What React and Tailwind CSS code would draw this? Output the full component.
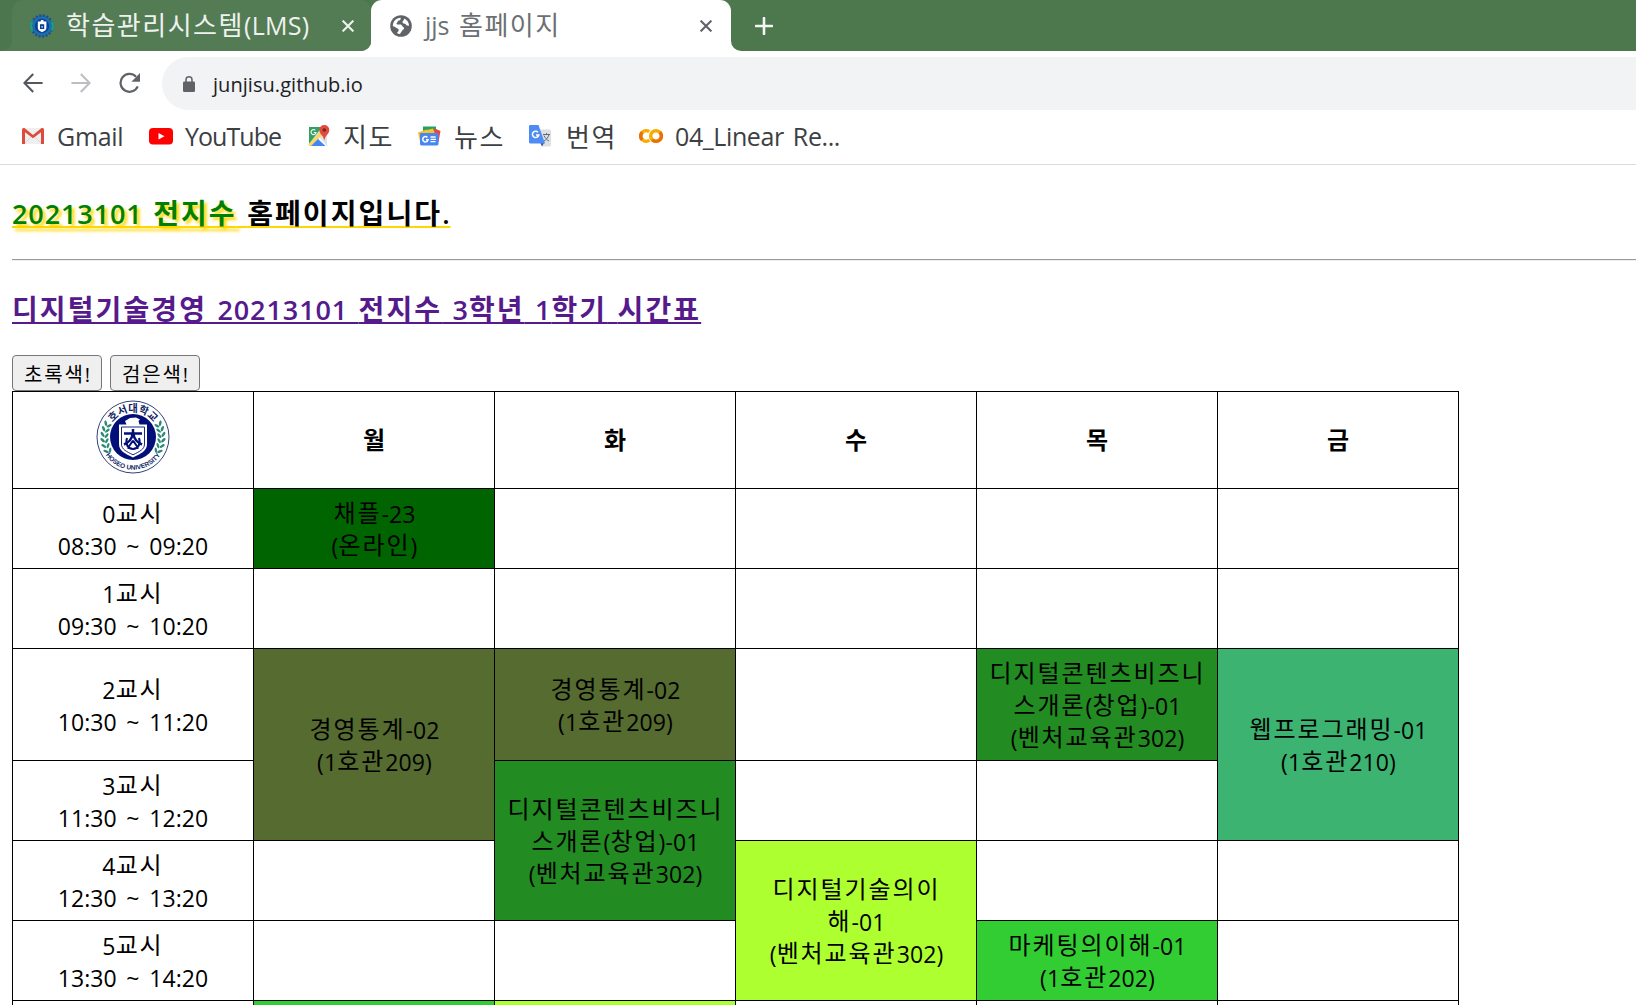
import React from "react";

const HANGUL = /([\u3131-\uD79D]+)/;

/* Hangul runs take their own size and tracking, so that syllables keep an even pitch beside the Latin text. */
function Mixed({ text, ko }) {
  return text.split(HANGUL).map((part, i) =>
    i % 2 ? (
      <span key={i} className={ko}>
        {part}
      </span>
    ) : (
      part
    )
  );
}

const KO_CELL = "relative -top-px font-['Noto_Sans_CJK_KR'] text-[24px] leading-[24px] tracking-[1.92px]";
const KO_HEAD = "font-['Noto_Sans_CJK_KR'] font-bold text-[28px] tracking-[2.1px]";
const KO_BAR = "font-['Noto_Sans_CJK_KR'] text-[26px] tracking-[1.5px]";
const KO_BTN = "font-['Noto_Sans_CJK_KR'] text-[20px] tracking-[1.8px]";

function Cross({ className }) {
  return (
    <svg viewBox="0 0 12 12" className={className} stroke="currentColor" strokeWidth="2.1" fill="none">
      <path d="M.6.6l10.8 10.8M11.400.6L.6 11.400" />
    </svg>
  );
}

function LmsIcon() {
  return (
    <svg viewBox="0 0 24 24" className="h-6 w-6 shrink-0">
      <circle cx="12" cy="12" r="10.4" fill="#1c6fa8" />
      <circle cx="12" cy="12" r="10.6" fill="none" stroke="#1d4f96" strokeWidth="2.4" strokeDasharray="2 1.6" />
      <path d="M2.2 7.5a11 11 0 0 0 0 9M21.8 7.5a11 11 0 0 1 0 9" fill="none" stroke="#17a08c" strokeWidth="2.2" />
      <circle cx="12" cy="12" r="7.2" fill="#0b3f95" />
      <path d="M7.8 7.6h2.6l.8-1.6h2l.6 1.6h2.6v6.2c0 2.2-1.7 3.4-4.3 4.4-2.6-1-4.3-2.2-4.3-4.4z" fill="#fff" />
      <path d="M10 10.2h4.2v4.8H10z" fill="#0b3f95" />
      <path d="M11.2 12h1.8v1.8h-1.8z" fill="#8fb0dc" />
    </svg>
  );
}

function GlobeIcon() {
  return (
    <svg viewBox="0 0 22 22" className="h-[22px] w-[22px] shrink-0">
      <circle cx="11" cy="11" r="10.8" fill="#5f6368" />
      <path
        d="M2.9 11.2C2.6 6.600 6.200 2.900 10.700 2.700L10.600 4.200C10.500 5.200 9.400 5.300 8.500 5.600 7.600 6 8 7.200 7 7.700 6.300 8.100 6.500 9.400 7.500 9.500L10.800 9.600C12.200 9.800 11.800 11.600 13.100 11.900 14.400 12.200 14.400 13.900 13.300 14.400 12.100 15 12 16 11.300 16.900L9.900 19C8.800 18.900 7.800 18.500 6.900 18L8.300 16.200C8.900 15.300 8.900 14.300 8 13.700 6.800 12.900 5.300 12.600 4.700 11.700z"
        fill="#fff"
      />
      <path
        d="M14.200 3.400C17 4.600 19 7.400 19.100 10.700L17.200 10.500C16 10.300 15.900 9 14.800 8.800 13.500 8.600 12.300 8 12.500 6.800 12.700 5.700 14 5.200 14.200 3.400z"
        fill="#fff"
      />
    </svg>
  );
}

function BackIcon({ className }) {
  return (
    <svg viewBox="0 0 20 20" className={className} fill="none" stroke="currentColor" strokeWidth="2.100">
      <path d="M19.600 10H1.800M10.200 1L1.400 10l8.800 9" />
    </svg>
  );
}

function ReloadIcon() {
  return (
    <svg viewBox="0 0 22 22" className="h-[22px] w-[22px]">
      <path d="M18.700 14.300A8.900 8.900 0 1 1 17 4.800" fill="none" stroke="#5f6368" strokeWidth="2.200" />
      <path d="M21 1v8.800h-8.600z" fill="#5f6368" />
    </svg>
  );
}

function LockIcon() {
  return (
    <svg viewBox="0 0 12 16" className="h-4 w-3 shrink-0">
      <rect x="0" y="5.500" width="12" height="10.500" rx="1.200" fill="#5f6368" />
      <path d="M3 6V3.800a3 3 0 0 1 6 0V6" fill="none" stroke="#5f6368" strokeWidth="1.500" />
    </svg>
  );
}

function GmailIcon() {
  return (
    <svg viewBox="0 0 24 24" className="h-6 w-6 shrink-0">
      <path d="M3 4h18v16H3z" fill="#efefef" />
      <path d="M3.500 19.500l7-7M20.500 19.500l-7-7" stroke="#d8d8d8" strokeWidth="1" />
      <path d="M1 5.500A1.500 1.500 0 0 1 2.500 4h.9L12 11l8.600-7h.9A1.500 1.500 0 0 1 23 5.500V20h-3V8.300l-8 6-8-6V20H1z" fill="#dc4b3e" />
    </svg>
  );
}

function YouTubeIcon() {
  return (
    <svg viewBox="0 0 24 24" className="h-6 w-6 shrink-0">
      <rect x="0" y="4" width="24" height="16.500" rx="4" fill="#f00" />
      <path d="M9.500 9l6 3.300-6 3.300z" fill="#fff" />
    </svg>
  );
}

function MapsIcon() {
  return (
    <svg viewBox="0 0 24 24" className="h-6 w-6 shrink-0">
      <path d="M2 3h13l5 8v11H2z" fill="#dfe3e8" />
      <path d="M2 3h13L2 20z" fill="#34a062" />
      <path d="M1.500 20.500L14.500 6l3 3L4.500 22H2z" fill="#fdd663" />
      <path d="M4 22l8-8 8.500 8z" fill="#4285f4" />
      <path d="M11 15l1.500-1.500L20.500 22h-2z" fill="#fff" />
      <path d="M8.300 6.300A2.500 2.500 0 1 0 9 8.500H6.800" fill="none" stroke="#fff" strokeWidth="1.100" />
      <path d="M17.300 1a5 5 0 0 1 5 5c0 4-4 5-5 10.500C16.300 11 12.300 10 12.300 6a5 5 0 0 1 5-5z" fill="#e04a3f" />
      <circle cx="17.300" cy="6" r="1.800" fill="#7b231e" />
    </svg>
  );
}

function NewsIcon() {
  return (
    <svg viewBox="0 0 24 24" className="h-6 w-6 shrink-0">
      <path d="M5 2.500h13v8H5z" fill="#1fa463" />
      <path d="M0 8.500l9-3 3 8-9.500 6z" fill="#f9bb2d" />
      <path d="M9 6.500l9-1.500 4.500 2-2 11-9-3z" fill="#e8453c" />
      <path d="M5 7l10-2.500 2 5H5z" fill="#fbc02d" />
      <rect x="2" y="9" width="18.500" height="12.500" rx="1.400" fill="#4a86f0" />
      <path d="M9.400 13.400a2.700 2.700 0 1 0 .7 2.300H8" fill="none" stroke="#fff" strokeWidth="1.500" />
      <path d="M12.500 13h5M12.500 15.300h5.500M12.500 17.600h5" stroke="#fff" strokeWidth="1.300" />
    </svg>
  );
}

function TranslateIcon() {
  return (
    <svg viewBox="0 0 24 24" className="h-6 w-6 shrink-0">
      <path d="M9 5.500h12.500A1.500 1.500 0 0 1 23 7v14a1.500 1.500 0 0 1-1.500 1.500H14z" fill="#dcdfe3" />
      <path d="M15 10.500h7M18.500 9v1.500M21 10.500c-1 3.500-3 5.500-5 6.500M16 11.500c1 2.500 3 4.500 5 5.500" stroke="#5c7077" strokeWidth="1" fill="none" />
      <path d="M12 18h4.500L14 22.500z" fill="#3a4fb5" />
      <path d="M1.500 1h9L17 19.500H2.500A1.500 1.500 0 0 1 1 18V2z" fill="#4e8cf3" />
      <path d="M10 8.200A3.200 3.200 0 1 0 10.800 11H8" fill="none" stroke="#fff" strokeWidth="1.500" />
    </svg>
  );
}

function ColabIcon() {
  return (
    <svg viewBox="0 0 24 24" className="h-6 w-6 shrink-0" fill="none" strokeWidth="3.500">
      <circle cx="17" cy="12" r="5.300" stroke="#f9ab00" />
      <path d="M13.200 15.800a5.300 5.300 0 0 0 7.600-7.600" stroke="#e8710a" />
      <path d="M10.200 7.600a5.300 5.300 0 1 0 .2 8.600" stroke="#f9ab00" />
      <path d="M3.200 8.200a5.300 5.300 0 0 0 0 7.600" stroke="#e8710a" />
    </svg>
  );
}

const LEAVES = [-30, -19, -8, 3, 14, 25];

function Emblem() {
  const laurel = LEAVES.map((a) => (
    <g key={a} transform={`rotate(${a} 37 37)`}>
      <ellipse cx="6.500" cy="36" rx="1.300" ry="2.900" transform="rotate(-38 6.500 36)" />
      <ellipse cx="10.600" cy="37" rx="1.200" ry="2.800" transform="rotate(38 10.600 37)" />
    </g>
  ));
  return (
    <svg viewBox="0 0 74 74" className="h-[74px] w-[74px] tracking-normal [word-spacing:0px]">
      <defs>
        <path id="arc-top" d="M12 37a25 25 0 0 1 50 0" />
        <path id="arc-bottom" d="M4.300 37a32.700 32.700 0 0 0 65.400 0" />
      </defs>
      <circle cx="37" cy="37" r="36" fill="#fff" stroke="#1b2d6b" strokeWidth="0.900" />
      <g fill="#2a8a74">
        {laurel}
        <g transform="translate(74 0) scale(-1 1)">{laurel}</g>
      </g>
      <circle cx="37" cy="37" r="23" fill="#020f78" />
      <text fill="#0d1d63" fontSize="10.300" fontWeight="700" fontFamily="'Noto Sans CJK KR', sans-serif" textAnchor="middle">
        <textPath href="#arc-top" startOffset="50%">
          호서대학교
        </textPath>
      </text>
      <text fill="#0d1d63" fontSize="6.500" fontWeight="700" fontFamily="'Liberation Sans', sans-serif" textAnchor="middle">
        <textPath href="#arc-bottom" startOffset="50%">
          HOSEO UNIVERSITY
        </textPath>
      </text>
      <path d="M23 24.500h7.500l-1.500-3.500 5-3 6-.5 4 2-1.500 1.500 1 3.500H51V44c0 7-6 9.500-14 13.500C29 53.500 23 51 23 44z" fill="#fff" />
      <path d="M25.500 27h23v17c0 5.500-5 7.500-11.500 10.800C30.500 51.500 25.500 49.500 25.500 44z" fill="none" stroke="#020f78" strokeWidth="0.900" />
      <path d="M28 33.500h18M37 29v5M36.500 34c-.5 5-4 8.500-8.500 10.500M37.500 34c.5 5 4 8.500 8.500 10.500" fill="none" stroke="#020f78" strokeWidth="2.500" />
      <path d="M31 38c-2 6 1 11 6 11s8-5 6-11M37 40.500l-5.500 8M37 40.500l5.500 8" fill="none" stroke="#020f78" strokeWidth="2" />
    </svg>
  );
}

const BOOKMARKS = [
  { label: "Gmail", icon: GmailIcon, width: "w-[128px]", gap: "gap-[12px]" },
  { label: "YouTube", icon: YouTubeIcon, width: "w-[158px]", gap: "gap-[12px]", tracking: "tracking-[-0.95px]" },
  { label: "지도", icon: MapsIcon, width: "w-[111px]", gap: "gap-[12px]" },
  { label: "뉴스", icon: NewsIcon, width: "w-[110px]", gap: "gap-[12px]" },
  { label: "번역", icon: TranslateIcon, width: "w-[111px]", gap: "gap-[14px]" },
  { label: "04_Linear Re...", icon: ColabIcon, width: "w-[220px]", gap: "gap-[12px]", tracking: "tracking-[-0.4px]" },
];

const STATS = ["경영통계-02", "(1호관209)"];
const STARTUP = ["디지털콘텐츠비즈니", "스개론(창업)-01", "(벤처교육관302)"];

const ROWS = [
  {
    time: ["0교시", "08:30 ~ 09:20"],
    height: "h-[80px]",
    cells: [{ lines: ["채플-23", "(온라인)"], bg: "bg-[#006400]" }, {}, {}, {}, {}],
  },
  { time: ["1교시", "09:30 ~ 10:20"], height: "h-[80px]", cells: [{}, {}, {}, {}, {}] },
  {
    time: ["2교시", "10:30 ~ 11:20"],
    height: "h-[112px]",
    cells: [
      { lines: STATS, bg: "bg-[#556b2f]", span: 2 },
      { lines: STATS, bg: "bg-[#556b2f]" },
      {},
      { lines: STARTUP, bg: "bg-[#228b22]" },
      { lines: ["웹프로그래밍-01", "(1호관210)"], bg: "bg-[#3cb371]", span: 2 },
    ],
  },
  {
    time: ["3교시", "11:30 ~ 12:20"],
    height: "h-[80px]",
    cells: [{ lines: STARTUP, bg: "bg-[#228b22]", span: 2 }, {}, {}],
  },
  {
    time: ["4교시", "12:30 ~ 13:20"],
    height: "h-[80px]",
    cells: [{}, { lines: ["디지털기술의이", "해-01", "(벤처교육관302)"], bg: "bg-[#adff2f]", span: 2 }, {}, {}],
  },
  {
    time: ["5교시", "13:30 ~ 14:20"],
    height: "h-[80px]",
    cells: [{}, {}, { lines: ["마케팅의이해-01", "(1호관202)"], bg: "bg-[#32cd32]" }, {}],
  },
  {
    time: [],
    height: "h-[80px]",
    cells: [{ bg: "bg-[#32cd32]" }, { bg: "bg-[#adff2f]" }, {}, {}, {}],
  },
];

function Lines({ lines, className = "pl-px" }) {
  return lines.map((line) => (
    <div key={line} className={`h-8 pt-px whitespace-nowrap ${className}`}>
      <Mixed text={line} ko={KO_CELL} />
    </div>
  ));
}

function Timetable() {
  return (
    <table className="w-[1447px] table-fixed border-collapse text-center text-[23px] leading-8 tracking-[0.1px] [word-spacing:3.5px]">
      <tbody>
        <tr className="h-[97px]">
          <th className="border border-black p-0">
            <div className="flex h-[80px] items-start justify-center pr-px">
              <Emblem />
            </div>
          </th>
          {["월", "화", "수", "목", "금"].map((day) => (
            <th key={day} className="border border-black p-0 pb-[2px] font-['Noto_Sans_CJK_KR'] text-[24px] font-bold">
              {day}
            </th>
          ))}
        </tr>
        {ROWS.map((row, r) => (
          <tr key={r} className={row.height}>
            <td className="border border-black p-0">
              <Lines lines={row.time} className="pl-0" />
            </td>
            {row.cells.map((cell, c) => (
              <td key={c} rowSpan={cell.span || 1} className={`border border-black p-0 ${cell.bg || "bg-white"}`}>
                {cell.lines && <Lines lines={cell.lines} />}
              </td>
            ))}
          </tr>
        ))}
      </tbody>
    </table>
  );
}

function TabStrip() {
  return (
    <div className="flex h-[51px] bg-white text-[25px] leading-[50px]">
      <div className="flex w-[371px] overflow-hidden rounded-br-[10px] bg-[#537b54]">
        <div className="w-3 rounded-br-[10px] bg-[#4c774d]" />
        <div className="flex flex-1 bg-linear-to-b from-[#4c774d] from-50% to-[#537b54] to-50%">
          <div className="flex flex-1 items-center rounded-t-[11px] bg-[#537b54] pl-[18px] text-[#eef2ee]">
            <LmsIcon />
            <div className="ml-[12px] h-[53px] w-[263px] whitespace-nowrap tracking-[0.3px]">
              <Mixed text="학습관리시스템(LMS)" ko={KO_BAR} />
            </div>
            <Cross className="ml-[13px] h-3 w-3" />
          </div>
        </div>
      </div>
      <div className="flex w-[360px] bg-linear-to-b from-[#4d774d] from-50% to-white to-50%">
        <div className="flex flex-1 items-center rounded-t-[11px] bg-white pl-[19px] text-[#6c7074]">
          <GlobeIcon />
          <div className="ml-[13px] h-[53px] w-[262px] whitespace-nowrap [word-spacing:3px]">
            <Mixed text="jjs 홈페이지" ko={KO_BAR} />
          </div>
          <Cross className="ml-[13px] h-3 w-3 text-[#5f6368]" />
        </div>
      </div>
      <div className="flex flex-1 items-center rounded-bl-[10px] bg-[#4d774d] pl-6">
        <svg viewBox="0 0 18 18" className="h-[18px] w-[18px]" stroke="#f3f6f3" strokeWidth="2.600" strokeLinecap="round">
          <path d="M1 9h16M9 1v16" />
        </svg>
      </div>
    </div>
  );
}

export default function App() {
  return (
    <div className="h-[1005px] w-[1636px] overflow-hidden bg-white font-['Open_Sans','Noto_Sans_CJK_KR',sans-serif] text-black">
      <TabStrip />
      <div className="flex h-[65px] items-start pt-[6px] pl-[23px]">
        <div className="flex h-[52px] items-center">
          <BackIcon className="h-5 w-5 text-[#54585d]" />
          <BackIcon className="ml-7 h-5 w-5 rotate-180 text-[#bcbec1]" />
          <div className="ml-[28px]">
            <ReloadIcon />
          </div>
        </div>
        <div className="ml-[21px] flex h-[53px] flex-1 items-center rounded-l-full bg-[#f1f3f4] pl-[21px]">
          <LockIcon />
          <span className="ml-[18px] pt-[3px] text-[20px] leading-8 tracking-[0.05px] text-[#202124]">junjisu.github.io</span>
        </div>
      </div>
      <nav className="flex h-[49px] items-center border-b border-[#dadce0] pb-[8px] pl-[21px] text-[25px] leading-[40px] text-[#3c4043]">
        {BOOKMARKS.map(({ label, icon: Icon, width, gap, tracking }) => (
          <div key={label} className={`flex h-10 items-center ${width} ${gap}`}>
            <Icon />
            <span className={`h-[41px] whitespace-nowrap [word-spacing:3px] ${tracking || "tracking-[-0.3px]"}`}>
              <Mixed text={label} ko={KO_BAR} />
            </span>
          </div>
        ))}
      </nav>
      <main className="pl-3">
        <h3 className="mt-[27px] h-10 text-[27px] leading-10 font-semibold tracking-[0.9px] whitespace-nowrap [word-spacing:2.5px]">
          <span className="underline decoration-[#ffd700] decoration-2 underline-offset-[2px] [text-decoration-skip-ink:none]">
            <span className="text-[#008000] [text-shadow:3px_3px_3px_#ffd700]">
              <Mixed text="20213101 전지수" ko={KO_HEAD} />
            </span>
            <Mixed text=" 홈페이지입니다." ko={KO_HEAD} />
          </span>
        </h3>
        <div className="mt-[27px] h-[2px] border-t border-b border-t-[#9a9a9a] border-b-[#eeeeee]" />
        <h3 className="mt-[27px] h-10 text-[27px] leading-10 font-semibold tracking-[0.9px] whitespace-nowrap text-[#551a8b] [word-spacing:2.5px]">
          <a className="underline decoration-2 underline-offset-[2px] [text-decoration-skip-ink:none]">
            <Mixed text="디지털기술경영 20213101 전지수 3학년 1학기 시간표" ko={KO_HEAD} />
          </a>
        </h3>
        <div className="mt-[27px] flex h-9 gap-2">
          {["초록색!", "검은색!"].map((label) => (
            <button
              key={label}
              className="h-9 w-[90px] rounded-[4px] border border-[#767676] bg-[#efefef] text-[20px] leading-[36px] whitespace-nowrap"
            >
              <div className="h-[34px]">
                <Mixed text={label} ko={KO_BTN} />
              </div>
            </button>
          ))}
        </div>
        <Timetable />
      </main>
    </div>
  );
}
